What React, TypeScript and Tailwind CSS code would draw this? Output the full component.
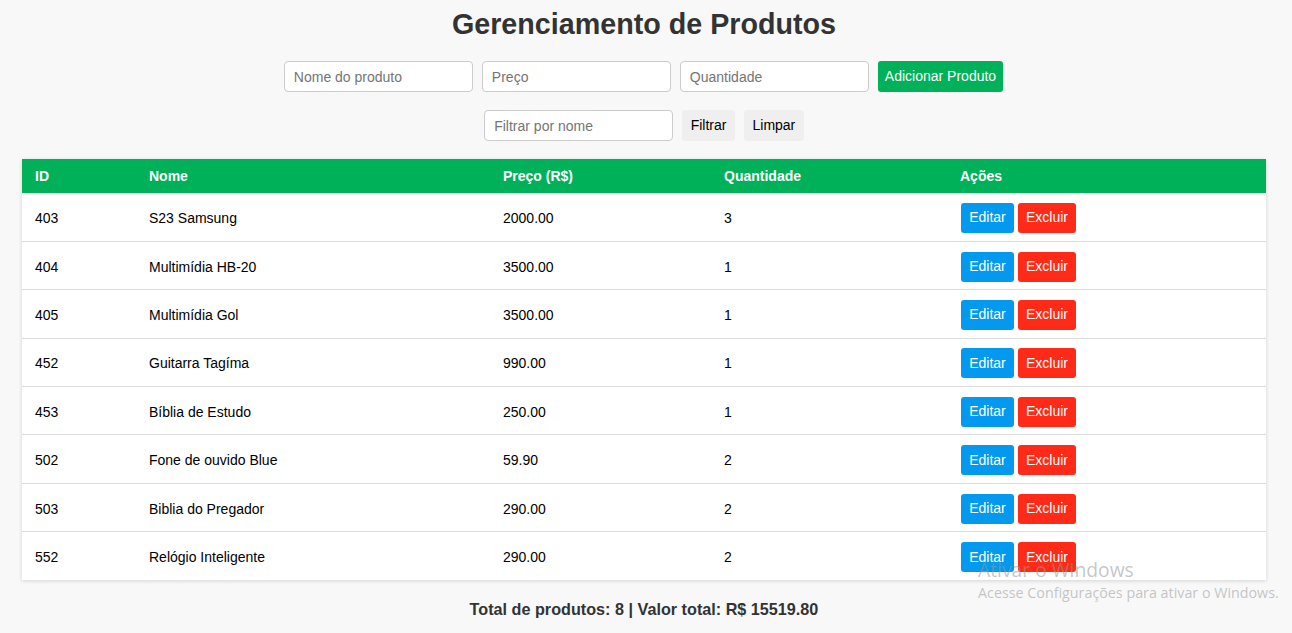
import React from "react"

type Produto = {
    id: number
    nome: string
    preco: number
    quantidade: number
}

const produtos: Produto[] = [
    { id: 403, nome: "S23 Samsung", preco: 2000, quantidade: 3 },
    { id: 404, nome: "Multimídia HB-20", preco: 3500, quantidade: 1 },
    { id: 405, nome: "Multimídia Gol", preco: 3500, quantidade: 1 },
    { id: 452, nome: "Guitarra Tagíma", preco: 990, quantidade: 1 },
    { id: 453, nome: "Bíblia de Estudo", preco: 250, quantidade: 1 },
    { id: 502, nome: "Fone de ouvido Blue", preco: 59.9, quantidade: 2 },
    { id: 503, nome: "Biblia do Pregador", preco: 290, quantidade: 2 },
    { id: 552, nome: "Relógio Inteligente", preco: 290, quantidade: 2 },
]

const inputClass =
    "w-[189px] h-[31px] px-[9px] text-[14px] bg-white border border-[#cccccc] rounded-[4px] text-[#333] placeholder:text-[#757575] outline-none"

const App = () => {
    const total = produtos.reduce((acc, p) => acc + p.preco * p.quantidade, 0)

    return (
        <div className="relative min-h-[633px] bg-[#f8f8f8] font-['Liberation_Sans',Arial,sans-serif] text-[#333]">
            <div className="w-[1288px]">
                <h1 className="text-[28.7px] font-bold text-center pt-[5px] leading-[38px]">Gerenciamento de Produtos</h1>

                <div className="flex justify-center gap-[9px] mt-[18px] mr-[1px]">
                    <input className={inputClass} placeholder="Nome do produto" />
                    <input className={inputClass} placeholder="Preço" />
                    <input className={inputClass} placeholder="Quantidade" />
                    <button className="h-[31px] px-[7px] bg-[#00b159] text-white text-[14px] rounded-[3px]">Adicionar Produto</button>
                </div>

                <div className="flex justify-center gap-[9px] mt-[18px]">
                    <input className={inputClass} placeholder="Filtrar por nome" />
                    <button className="h-[31px] px-[8.5px] bg-[#efefef] text-black text-[14px] rounded-[3px]">Filtrar</button>
                    <button className="h-[31px] px-[8.5px] bg-[#efefef] text-black text-[14px] rounded-[3px]">Limpar</button>
                </div>

                <div className="ml-[22px] mr-[22px] mt-[18px] bg-white shadow-[0_1px_4px_rgba(0,0,0,0.15)]">
                    <table className="w-full border-collapse text-[14px] text-left">
                        <thead>
                            <tr className="bg-[#00b159] text-white h-[34px]">
                                <th className="w-[114px] px-[13px] font-bold">ID</th>
                                <th className="w-[354px] px-[13px] font-bold">Nome</th>
                                <th className="w-[221px] px-[13px] font-bold">Preço (R$)</th>
                                <th className="w-[236px] px-[13px] font-bold">Quantidade</th>
                                <th className="px-[13px] font-bold">Ações</th>
                            </tr>
                        </thead>
                        <tbody>
                            {produtos.map((p, i) => (
                                <tr key={p.id} className={i < produtos.length - 1 ? "h-[48.4px] border-b border-[#dddddd]" : "h-[48.4px]"}>
                                    <td className="px-[13px] pt-[3px] text-black">{p.id}</td>
                                    <td className="px-[13px] pt-[3px] text-black">{p.nome}</td>
                                    <td className="px-[13px] pt-[3px] text-black">{p.preco.toFixed(2)}</td>
                                    <td className="px-[13px] pt-[3px] text-black">{p.quantidade}</td>
                                    <td className="px-[13px] pt-[2px]">
                                        <div className="flex gap-[4px] ml-[1px]">
                                            <button className="h-[30px] w-[53px] bg-[#0399ee] text-white text-[14px] rounded-[3px]">Editar</button>
                                            <button className="h-[30px] w-[58px] bg-[#ff2a17] text-white text-[14px] rounded-[3px]">Excluir</button>
                                        </div>
                                    </td>
                                </tr>
                            ))}
                        </tbody>
                    </table>
                </div>

                <p className="text-center text-[16.2px] font-bold mt-[17px]">
                    Total de produtos: {produtos.length} | Valor total: R$ {total.toFixed(2)}
                </p>
            </div>

            {/* marca d'agua do windows */}
            <div className="absolute left-[978px] top-[557px] pointer-events-none font-['Open_Sans','Noto_Sans',sans-serif] text-[rgba(150,150,150,0.55)]">
                <div className="text-[19.3px] leading-[26px]">Ativar o Windows</div>
                <div className="text-[14.3px] leading-[20px]">Acesse Configurações para ativar o Windows.</div>
            </div>
        </div>
    )
}

export default App
